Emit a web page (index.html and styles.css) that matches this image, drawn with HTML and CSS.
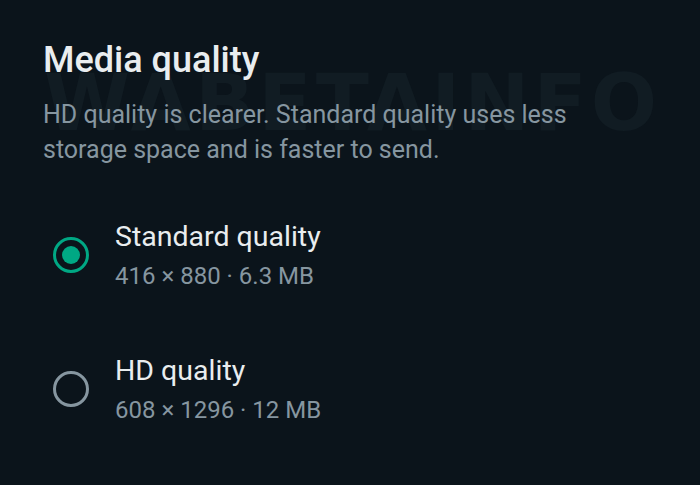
FILE: index.html
```html
<!DOCTYPE html>
<html>
<head>
<meta charset="utf-8">
<link rel="stylesheet" href="styles.css">
</head>
<body>
<main class="screen">
  <div class="watermark">WABETAINFO</div>
  <header class="intro">
    <h1 class="title">Media quality</h1>
    <p class="desc">HD quality is clearer. Standard quality uses less storage space and is faster to send.</p>
  </header>
  <ul class="options">
    <li class="option">
      <span class="radio checked"><span class="dot"></span></span>
      <div class="texts">
        <div class="label">Standard quality</div>
        <div class="meta">416 × 880 · 6.3 MB</div>
      </div>
    </li>
    <li class="option">
      <span class="radio"></span>
      <div class="texts">
        <div class="label">HD quality</div>
        <div class="meta">608 × 1296 · 12 MB</div>
      </div>
    </li>
  </ul>
</main>
</body>
</html>
```
FILE: styles.css
```css
html, body {
  margin: 0;
  padding: 0;
  background: #0b141b;
}
.screen {
  position: relative;
  width: 700px;
  height: 485px;
  overflow: hidden;
  background: #0b141b;
  font-family: Roboto, "Noto Sans", sans-serif;
  box-sizing: border-box;
  padding: 40px 0 0 43px;
}
.watermark {
  position: absolute;
  left: 44px;
  top: 58px;
  font-family: "DejaVu Sans", sans-serif;
  font-weight: bold;
  font-size: 78px;
  line-height: 90px;
  letter-spacing: 4px;
  color: #111c23;
  z-index: 0;
}
.intro, .options {
  position: relative;
  z-index: 1;
}
.title {
  margin: 0;
  font-size: 36px;
  font-weight: 500;
  color: #e9edef;
  line-height: 40px;
}
.desc {
  margin: 17px 0 0;
  width: 570px;
  font-size: 25px;
  line-height: 35px;
  color: #8696a0;
}
.options {
  list-style: none;
  margin: 52px 0 0;
  padding: 0;
}
.option {
  display: flex;
  align-items: center;
  gap: 26px;
  padding-left: 10px;
}
.option + .option {
  margin-top: 59px;
}
.radio {
  width: 36px;
  height: 36px;
  box-sizing: border-box;
  border: 3.5px solid #8696a0;
  border-radius: 50%;
  display: flex;
  align-items: center;
  justify-content: center;
  flex: none;
  margin-top: -3px;
}
.radio.checked {
  border-color: #00a884;
}
.dot {
  width: 18px;
  height: 18px;
  border-radius: 50%;
  background: #00a884;
}
.label {
  font-size: 28.5px;
  line-height: 36px;
  color: #e9edef;
}
.meta {
  font-size: 24px;
  line-height: 36px;
  color: #8696a0;
  margin-top: 3px;
}
```
